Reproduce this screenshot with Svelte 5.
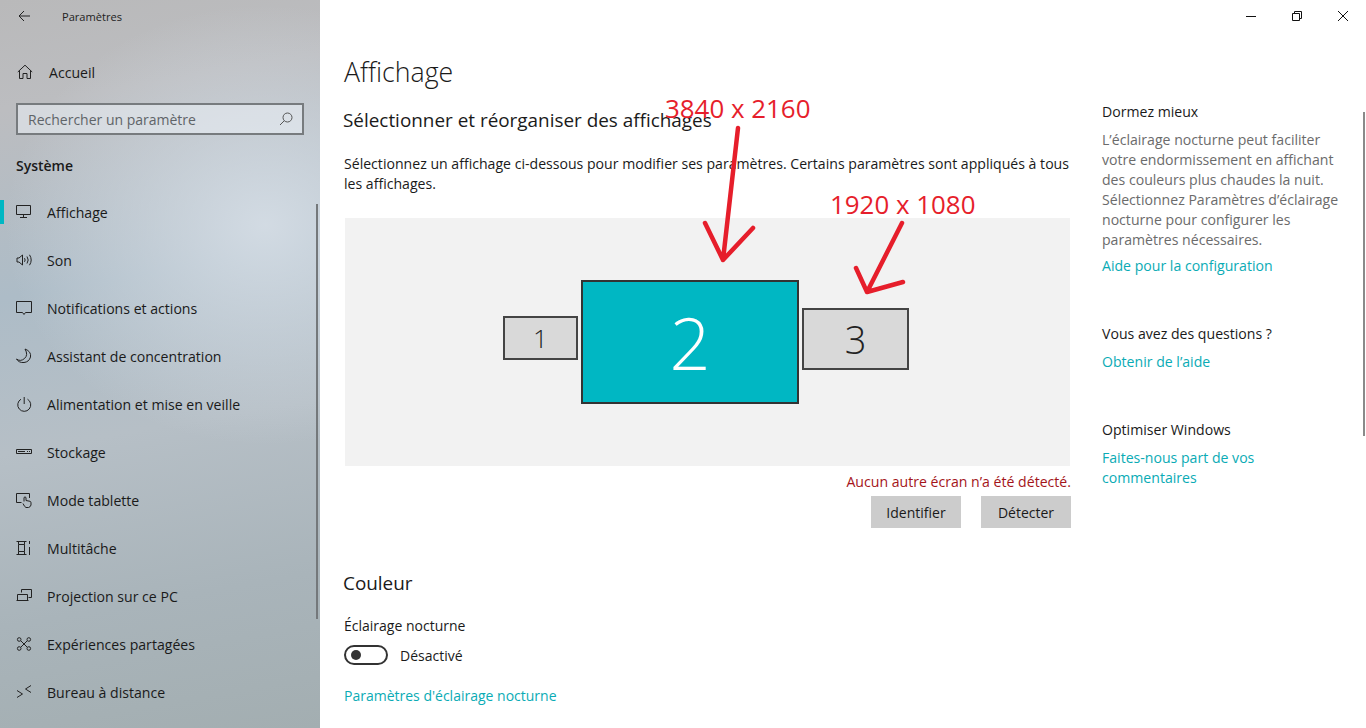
<script>
	const navItems = [
		{ label: 'Affichage', icon: 'display', active: true },
		{ label: 'Son', icon: 'sound' },
		{ label: 'Notifications et actions', icon: 'notif' },
		{ label: 'Assistant de concentration', icon: 'moon' },
		{ label: 'Alimentation et mise en veille', icon: 'power' },
		{ label: 'Stockage', icon: 'storage' },
		{ label: 'Mode tablette', icon: 'tablet' },
		{ label: 'Multitâche', icon: 'multi' },
		{ label: 'Projection sur ce PC', icon: 'project' },
		{ label: 'Expériences partagées', icon: 'shared' },
		{ label: 'Bureau à distance', icon: 'remote' }
	];

	const icons = {
		display: 'M.5 1.500h14v9h-14zM7.500 10.500v3M4 13.500h7',
		sound: 'M1 6v4h2l3.500 3V3L3 6zM8.500 6.200q1.300 1.800 0 3.600M11 4.500q2.400 3.500 0 7M13.500 2.800q3.400 5.200 0 10.400',
		notif: 'M.5 1.500h15v11H9.500L8 14.500l-1.500-2H.5z',
		moon: 'M9 1q3.500 6-.5 9.500t-8 .5q2.500 4 7.500 3.500t6.500-5.500q1-5.500-5.500-8z',
		power: 'M5 3.200a6.500 6.500 0 1 0 6.500 0M8.200 1v7',
		storage: 'M.5 5.500h15v4H.5zM2 7.500h7M11 7.500h1M13 7.500h1',
		tablet: 'M13.500 6V1.500H.5v9h5M8 9.500V5.500q1-1.200 2 0v3l4 .8q1 .3 1 1.400v2.300q-.5 2-2.500 2.500H10q-1.500-.5-3-4',
		multi: 'M.5 1.500h10M.5 14.500h10M2.500 4.500h6v7h-6zM2.500 1.500v3M8.500 1.500v3M2.500 11.500v3M8.500 11.500v3M13.500 1v3M13.500 7v8',
		project: 'M5.500 4.500v-3h10v8h-3M1.500 6.500h10v6h-10zM.5 12.500h12',
		shared: 'M5 5l6 6M11 5l-6 6M5 3.500a1.800 1.800 0 1 1-3.600 0a1.800 1.800 0 1 1 3.600 0zM14.600 3.500a1.800 1.800 0 1 1-3.600 0a1.800 1.800 0 1 1 3.600 0zM5 12.500a1.800 1.800 0 1 1-3.600 0a1.800 1.800 0 1 1 3.600 0zM14.600 12.500a1.800 1.800 0 1 1-3.600 0a1.800 1.800 0 1 1 3.600 0z',
		remote: 'M1 6.500l5.500 3.500L1 13.500M15 1.500L9.500 5l5.500 3.500'
	};
</script>

<div class="window">
	<aside class="sidebar">
		<div class="titlebar">
			<svg class="back" width="13" height="12" viewBox="0 0 13 12" fill="none" stroke="#222" stroke-width="1">
				<path d="M12 6H1M6 1L1 6l5 5" />
			</svg>
			<span>Paramètres</span>
		</div>

		<div class="home">
			<svg width="16" height="16" viewBox="0 0 16 16" fill="none" stroke="#222" stroke-width="1">
				<path d="M.8 8L8 1.200 15.200 8M2.500 6.500v8h3.500v-5h4v5h3.500v-8" />
			</svg>
			<span>Accueil</span>
		</div>

		<div class="search">
			<span>Rechercher un paramètre</span>
			<svg width="14" height="14" viewBox="0 0 14 14" fill="none" stroke="#555" stroke-width="1">
				<circle cx="8.500" cy="5.500" r="4.500" />
				<path d="M5.200 8.800L1 13" />
			</svg>
		</div>

		<div class="group">Système</div>

		<nav>
			{#each navItems as item}
				<div class="nav-item" class:active={item.active}>
					<svg width="17" height="16" viewBox="0 0 17 16" fill="none" stroke="#222" stroke-width="1">
						<path d={icons[item.icon]} />
					</svg>
					<span>{item.label}</span>
				</div>
			{/each}
		</nav>

		<div class="side-scroll"></div>
	</aside>

	<main class="content">
		<div class="controls">
			<div class="ctl">
				<svg width="12" height="12" viewBox="0 0 12 12" stroke="#111" fill="none"><path d="M1 6.500h10" /></svg>
			</div>
			<div class="ctl">
				<svg width="12" height="12" viewBox="0 0 12 12" stroke="#111" fill="none"><path d="M1.500 3.500h7v7h-7zM3.500 3.500v-2h7v7h-2" /></svg>
			</div>
			<div class="ctl">
				<svg width="12" height="12" viewBox="0 0 12 12" stroke="#111" fill="none"><path d="M1 1l10 10M11 1L1 11" /></svg>
			</div>
		</div>

		<div class="columns">
			<section class="settings">
				<h1>Affichage</h1>
				<h2>Sélectionner et réorganiser des affichages</h2>
				<p class="intro">
					Sélectionnez un affichage ci-dessous pour modifier ses paramètres. Certains paramètres sont appliqués à tous les affichages.
				</p>

				<div class="arrange">
					<div class="screen s1">1</div>
					<div class="screen s2">2</div>
					<div class="screen s3">3</div>
				</div>

				<div class="notice">Aucun autre écran n’a été détecté.</div>
				<div class="buttons">
					<button>Identifier</button>
					<button>Détecter</button>
				</div>

				<h2 class="color">Couleur</h2>
				<div class="label">Éclairage nocturne</div>
				<div class="toggle-row">
					<div class="toggle"><div class="knob"></div></div>
					<span>Désactivé</span>
				</div>
				<div class="link night">Paramètres d'éclairage nocturne</div>
			</section>

			<aside class="help">
				<div class="help-title">Dormez mieux</div>
				<p>L’éclairage nocturne peut faciliter votre endormissement en affichant des couleurs plus chaudes la nuit. Sélectionnez Paramètres d’éclairage nocturne pour configurer les paramètres nécessaires.</p>
				<div class="link">Aide pour la configuration</div>

				<div class="help-title gap">Vous avez des questions ?</div>
				<div class="link first">Obtenir de l’aide</div>

				<div class="help-title gap">Optimiser Windows</div>
				<div class="link first">Faites-nous part de vos commentaires</div>
			</aside>
		</div>

		<div class="main-scroll"></div>
	</main>

	<!-- red annotations pasted on top of the screenshot -->
	<div class="note n1">3840 x 2160</div>
	<div class="note n2">1920 x 1080</div>
	<svg class="arrows" width="1366" height="728" fill="none" stroke="#e61e2b" stroke-width="4.500" stroke-linecap="round" stroke-linejoin="round">
		<path d="M738 128L723 260M705 223L723 260L753 228" />
		<path d="M902 223L867 292M856 268L867 292L903 282" />
	</svg>
</div>

<style>
	:global(body) {
		margin: 0;
		overflow: hidden;
	}

	.window {
		position: relative;
		display: flex;
		width: 1366px;
		height: 728px;
		overflow: hidden;
		background: #fff;
		font-family: 'Open Sans', 'Noto Sans', sans-serif;
		font-size: 14.100px;
		color: #1a1a1a;
	}

	.sidebar {
		position: relative;
		flex: 0 0 320px;
		box-sizing: border-box;
		background:
			radial-gradient(ellipse 260px 220px at 265px 225px, rgba(214, 222, 230, 0.9), rgba(214, 222, 230, 0) 100%),
			linear-gradient(170deg, #b9b9ba 0%, #bcbdc0 14%, #adbcc7 38%, #b6bfc6 58%, #a9b4ba 80%, #a3aeb1 100%);
	}

	.titlebar {
		display: flex;
		align-items: center;
		height: 32px;
		font-size: 11.100px;
		color: #222;
	}

	.back {
		margin-left: 18px;
		margin-right: 31px;
	}

	.home {
		display: flex;
		align-items: center;
		gap: 16px;
		height: 48px;
		margin-top: 16px;
		padding-left: 17px;
	}

	.search {
		display: flex;
		align-items: center;
		justify-content: space-between;
		box-sizing: border-box;
		height: 32px;
		margin: 7px 16px 0;
		padding: 0 9px 0 10px;
		border: 2px solid #777b7e;
		background: rgba(235, 240, 245, 0.55);
		font-size: 14px;
		color: #5f6468;
	}

	.group {
		margin: 21px 0 8px 16px;
		height: 24px;
		line-height: 20px;
		font-weight: 600;
		font-size: 14px;
	}

	.nav-item {
		position: relative;
		display: flex;
		align-items: center;
		gap: 14px;
		height: 48px;
		padding-left: 16px;
	}

	.nav-item.active::before {
		content: '';
		position: absolute;
		left: 0;
		top: 12px;
		width: 4px;
		height: 24px;
		background: #00b7c3;
	}

	.side-scroll {
		position: absolute;
		left: 316px;
		top: 204px;
		width: 2px;
		height: 415px;
		background: #74787b;
	}

	.content {
		position: relative;
		flex: 1;
		min-width: 0;
	}

	.controls {
		display: flex;
		justify-content: flex-end;
		height: 32px;
	}

	.ctl {
		display: flex;
		align-items: center;
		justify-content: center;
		width: 46px;
	}

	.columns {
		display: flex;
		padding-left: 24px;
	}

	.settings {
		flex: 0 0 727px;
	}

	h1 {
		margin: 20px 0 0;
		font-size: 26.700px;
		font-weight: 300;
		line-height: 40px;
	}

	h2 {
		margin: 15px 0 0 -1px;
		font-size: 18.900px;
		font-weight: 400;
		line-height: 26px;
	}

	.intro {
		margin: 21px 0 0;
		line-height: 20px;
	}

	.arrange {
		position: relative;
		height: 248px;
		margin: 24px 1px 0;
		background: #f2f2f2;
	}

	.screen {
		position: absolute;
		display: flex;
		align-items: center;
		justify-content: center;
		box-sizing: border-box;
		border: 2px solid #333;
		background: #d9d9d9;
		font-weight: 300;
		color: #222;
	}

	.s1 {
		left: 158px;
		top: 98px;
		width: 75px;
		height: 44px;
		font-size: 26px;
		border-color: #444;
	}

	.s2 {
		left: 236px;
		top: 62px;
		width: 218px;
		height: 124px;
		background: #00b7c3;
		color: #fff;
		font-size: 72px;
	}

	.s3 {
		left: 457px;
		top: 90px;
		width: 107px;
		height: 62px;
		font-size: 38px;
		border-color: #444;
	}

	.notice {
		margin-top: 6px;
		line-height: 20px;
		text-align: right;
		color: #a4151a;
	}

	.buttons {
		display: flex;
		justify-content: flex-end;
		gap: 20px;
		margin-top: 4px;
	}

	button {
		width: 90px;
		height: 32px;
		padding: 0;
		border: 0;
		background: #cccccc;
		font: inherit;
		font-size: 14px;
		color: #1a1a1a;
	}

	h2.color {
		margin-top: 42px;
	}

	.label {
		margin-top: 20px;
		line-height: 20px;
		font-size: 14px;
	}

	.toggle-row {
		display: flex;
		align-items: center;
		gap: 12px;
		margin-top: 9px;
		height: 20px;
		font-size: 14px;
	}

	.toggle {
		display: flex;
		align-items: center;
		box-sizing: border-box;
		width: 44px;
		height: 20px;
		padding-left: 5px;
		border: 2px solid #333;
		border-radius: 10px;
	}

	.knob {
		width: 10px;
		height: 10px;
		border-radius: 50%;
		background: #333;
	}

	.link {
		line-height: 20px;
		color: #0aabb5;
	}

	.link.night {
		margin-top: 21px;
		font-size: 14px;
	}

	.help {
		flex: 0 0 238px;
		margin-left: 31px;
		padding-top: 70px;
	}

	.help-title {
		line-height: 20px;
	}

	.help-title.gap {
		margin-top: 48px;
	}

	.help p {
		margin: 8px 0 6px;
		line-height: 20px;
		color: #6b6b6b;
	}

	.link.first {
		margin-top: 8px;
	}

	.main-scroll {
		position: absolute;
		right: 1px;
		top: 112px;
		width: 2px;
		height: 324px;
		background: #8a8a8a;
	}

	.note {
		position: absolute;
		font-size: 25.900px;
		line-height: 30px;
		color: #e61e2b;
		white-space: nowrap;
	}

	.n1 {
		left: 665px;
		top: 93px;
	}

	.n2 {
		left: 830px;
		top: 189px;
	}

	.arrows {
		position: absolute;
		left: 0;
		top: 0;
		pointer-events: none;
	}
</style>
